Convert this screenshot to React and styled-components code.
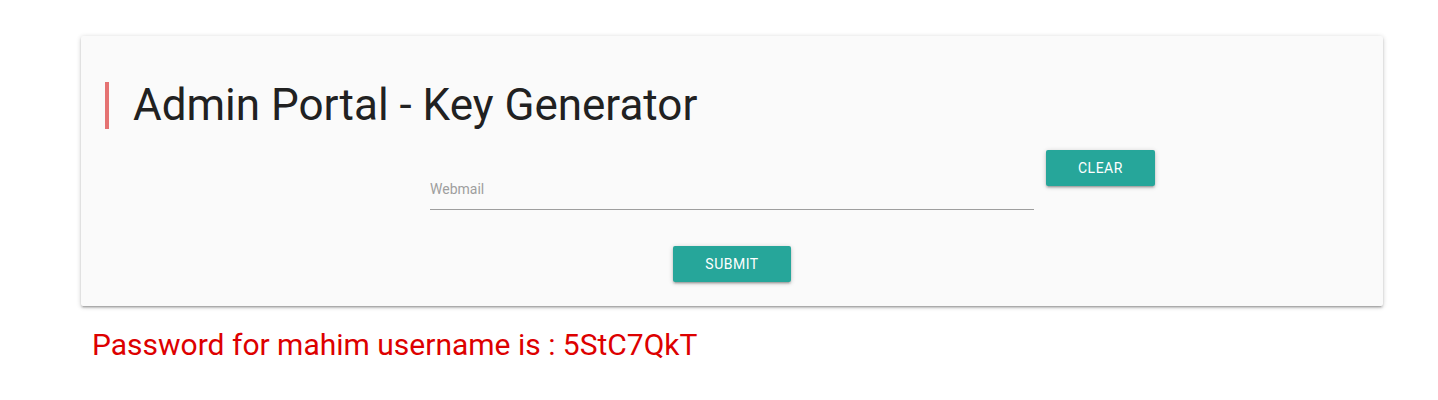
import React from 'react'
import styled, { createGlobalStyle } from 'styled-components';

const GlobalStyle = createGlobalStyle`
  body {
    margin: 0;
    background: #ffffff;
    font-family: Roboto, "Liberation Sans", sans-serif;
  }
`;

function App() {
  return (
    <>
      <GlobalStyle />
      <Page>
        <Card>
          <Title>Admin Portal - Key Generator</Title>
          <FormRow>
            <InputField>
              <Input type="text" placeholder="Webmail" />
            </InputField>
            <Button>Clear</Button>
          </FormRow>
          <SubmitRow>
            <Button>Submit</Button>
          </SubmitRow>
        </Card>
        <Result>Password for mahim username is : 5StC7QkT</Result>
      </Page>
    </>
  );
}

export default App;

const Page = styled.div`
width: 1302px;
margin-left: 81px;
padding-top: 36px;
`;

const Card = styled.div`
background: #fafafa;
border-radius: 2px;
box-shadow: 0 2px 2px 0 rgba(0,0,0,0.14), 0 3px 1px -2px rgba(0,0,0,0.12), 0 1px 5px 0 rgba(0,0,0,0.2);
padding: 46px 24px 24px;
`;

const Title = styled.h1`
margin: 0;
border-left: 4px solid #e57373;
padding-left: 24px;
font-size: 44px;
line-height: 47px;
font-weight: 400;
color: #212121;
`;

const FormRow = styled.div`
display: flex;
align-items: flex-start;
margin-top: 21px;
padding-left: 325px;
`;

const InputField = styled.div`
width: 604px;
padding-top: 18px;
margin-right: 12px;
`;

const Input = styled.input`
display: block;
box-sizing: border-box;
width: 100%;
height: 42px;
border: none;
border-bottom: 1px solid #9e9e9e;
background: transparent;
outline: none;
padding: 0;
font-family: Roboto, "Liberation Sans", sans-serif;
font-size: 14px;
color: #212121;
&::placeholder {
  color: #9e9e9e;
}
`;

const Button = styled.button`
height: 36px;
padding: 0 32px;
border: none;
border-radius: 2px;
background: #26a69a;
color: #ffffff;
font-family: Roboto, "Liberation Sans", sans-serif;
font-size: 14px;
letter-spacing: 0.5px;
text-transform: uppercase;
box-shadow: 0 2px 2px 0 rgba(0,0,0,0.14), 0 3px 1px -2px rgba(0,0,0,0.12), 0 1px 5px 0 rgba(0,0,0,0.2);
cursor: pointer;
`;

const SubmitRow = styled.div`
display: flex;
justify-content: center;
margin-top: 36px;
`;

const Result = styled.div`
margin-top: 21px;
padding-left: 11px;
font-size: 30px;
line-height: 36px;
color: #dd0000;
`;
